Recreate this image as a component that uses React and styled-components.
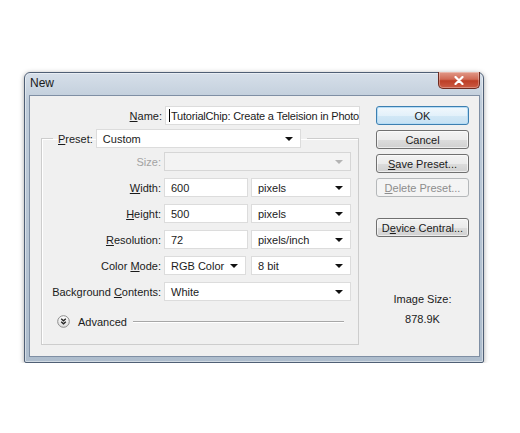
import React from "react";
import styled, { createGlobalStyle, css } from "styled-components";

const GlobalStyle = createGlobalStyle`
  body {
    margin: 0;
    background: #ffffff;
    font-family: "Liberation Sans", Arial, sans-serif;
    font-size: 11px;
    color: #1b1b1b;
  }
`;

const Page = styled.div`
  padding: 72px 0 0 24px;
`;

const Window = styled.div`
  width: 460px;
  height: 291px;
  box-sizing: border-box;
  display: flex;
  flex-direction: column;
  border: 1px solid #4f5f75;
  border-radius: 6px 6px 2px 2px;
  background: linear-gradient(to bottom, #d6dfe9 0%, #bfccda 10%, #aebdcd 100%);
  box-shadow: 0 1px 5px rgba(0, 0, 0, 0.35), inset 0 0 0 1px rgba(255, 255, 255, 0.45);
`;

const TitleBar = styled.div`
  height: 22px;
  display: flex;
  justify-content: space-between;
  align-items: flex-start;
  padding-left: 5px;
`;

const Title = styled.div`
  font-size: 12px;
  line-height: 14px;
  padding-top: 3px;
  color: #1a1a1a;
`;

const CloseButton = styled.div`
  width: 42px;
  height: 17px;
  margin: -1px 3px 0 0;
  box-sizing: border-box;
  display: flex;
  align-items: center;
  justify-content: center;
  border: 1px solid #6e2a1f;
  border-top: none;
  border-radius: 0 0 5px 5px;
  background: linear-gradient(to bottom, #e29a89 0%, #d06a55 45%, #bd3e26 55%, #cb5b44 100%);
  box-shadow: inset 0 0 0 1px rgba(255, 255, 255, 0.3);
`;

const Client = styled.div`
  flex: 1;
  margin: 0 3px 5px 4px;
  border: 1px solid #7f8fa4;
  background: #f0f0f0;
  display: flex;
  padding: 10px 10px 0 0;
`;

const FormArea = styled.div`
  width: 331px;
  display: flex;
  flex-direction: column;
`;

const NameRow = styled.div`
  display: grid;
  grid-template-columns: 132px 195px;
  column-gap: 3px;
  align-items: center;
`;

const Label = styled.span`
  text-align: right;
  white-space: nowrap;
  color: ${(p) => (p.$disabled ? "#a3a3a3" : "#1b1b1b")};
`;

const Field = styled.div`
  height: 19px;
  box-sizing: border-box;
  display: flex;
  align-items: center;
  padding-left: ${(p) => (p.$caret ? "3px" : "6px")};
  letter-spacing: ${(p) => (p.$caret ? "-0.2px" : "0")};
  background: #ffffff;
  border: 1px solid #dcdcdc;
  white-space: nowrap;
  overflow: hidden;
`;

const Caret = styled.span`
  width: 1px;
  height: 13px;
  background: #000;
  margin-right: 1px;
`;

const Select = styled.div`
  height: 19px;
  box-sizing: border-box;
  display: flex;
  align-items: center;
  justify-content: space-between;
  padding: 0 7px 0 6px;
  border: 1px solid ${(p) => (p.$disabled ? "#d6d6d6" : "#dcdcdc")};
  background: ${(p) => (p.$disabled ? "#f3f3f3" : "#ffffff")};
  white-space: nowrap;
  ${(p) =>
    p.$span &&
    css`
      grid-column: span 2;
    `}
  ${(p) =>
    p.$width &&
    css`
      width: ${p.$width}px;
    `}
`;

const Arrow = styled.span`
  width: 0;
  height: 0;
  border-left: 4px solid transparent;
  border-right: 4px solid transparent;
  border-top: 4px solid ${(p) => (p.$disabled ? "#b4b4b4" : "#111")};
`;

const Group = styled.fieldset`
  margin: 4px 0 0 11px;
  width: 318px;
  box-sizing: border-box;
  padding: 0 0 16px 0;
  border: 1px solid #cdcdcd;
  box-shadow: inset 1px 1px 0 #ffffff;
`;

const Legend = styled.legend`
  margin-left: 11px;
  padding: 0 6px 0 5px;
  display: flex;
  align-items: center;
  gap: 3px;
`;

const Rows = styled.div`
  margin-top: 4px;
  display: grid;
  grid-template-columns: 119px 84px 100px;
  grid-auto-rows: 19px;
  column-gap: 3px;
  row-gap: 7px;
  align-items: center;
`;

const AdvancedRow = styled.div`
  margin-top: 14px;
  display: flex;
  align-items: center;
  padding: 0 14px 0 15px;
`;

const AdvancedText = styled.span`
  margin: 0 6px 0 8px;
`;

const Groove = styled.div`
  flex: 1;
  height: 0;
  border-top: 1px solid #a7a7a7;
  border-bottom: 1px solid #ffffff;
`;

const ButtonColumn = styled.div`
  margin-left: auto;
  width: 93px;
  display: flex;
  flex-direction: column;
  align-items: center;
`;

const Button = styled.div`
  width: 93px;
  height: 19px;
  box-sizing: border-box;
  display: flex;
  align-items: center;
  justify-content: center;
  border: 1px solid #707070;
  border-radius: 3px;
  background: linear-gradient(to bottom, #f3f3f3 0%, #ebebeb 50%, #dddddd 51%, #d0d0d0 100%);
  box-shadow: inset 0 0 0 1px rgba(255, 255, 255, 0.6);
  margin-bottom: ${(p) => p.$gap ?? 5}px;
  ${(p) =>
    p.$default &&
    css`
      border-color: #3c7fb1;
      background: linear-gradient(to bottom, #f1f8fd 0%, #e3f1fa 50%, #d2e8f6 51%, #c6e1f3 100%);
      box-shadow: inset 0 0 0 1px #b6dcf5;
    `}
  ${(p) =>
    p.$disabled &&
    css`
      border-color: #b5b8ba;
      background: #f4f4f4;
      color: #8d8d8d;
      box-shadow: none;
    `}
`;

const SizeInfo = styled.div`
  margin-top: 50px;
  display: flex;
  flex-direction: column;
  align-items: center;
  gap: 6px;
  line-height: 14px;
`;

const AdvancedIcon = () => (
  <svg width="13" height="13" viewBox="0 0 13 13">
    <defs>
      <linearGradient id="adv" x1="0" y1="0" x2="0" y2="1">
        <stop offset="0" stopColor="#ffffff" />
        <stop offset="1" stopColor="#dcdcdc" />
      </linearGradient>
    </defs>
    <circle cx="6.5" cy="6.5" r="5.8" fill="url(#adv)" stroke="#8a8a8a" strokeWidth="1" />
    <path d="M4.2 3.8 L6.5 5.8 L8.8 3.8 M4.2 6.8 L6.5 8.8 L8.8 6.8" fill="none" stroke="#222" strokeWidth="1.3" />
  </svg>
);

const CloseIcon = () => (
  <svg width="10" height="9" viewBox="0 0 10 9">
    <path d="M1.5 1 L8.5 8 M8.5 1 L1.5 8" stroke="#ffffff" strokeWidth="2.2" strokeLinecap="round" />
  </svg>
);

const App = () => {
  return (
    <Page>
      <GlobalStyle />
      <Window>
        <TitleBar>
          <Title>New</Title>
          <CloseButton>
            <CloseIcon />
          </CloseButton>
        </TitleBar>
        <Client>
          <FormArea>
            <NameRow>
              <Label>
                <u>N</u>ame:
              </Label>
              <Field $caret>
                <Caret />
                TutorialChip: Create a Teleision in Photo
              </Field>
            </NameRow>
            <Group>
              <Legend>
                <Label>
                  <u>P</u>reset:
                </Label>
                <Select $width={205}>
                  Custom
                  <Arrow />
                </Select>
              </Legend>
              <Rows>
                <Label $disabled>Size:</Label>
                <Select $span $disabled>
                  <span />
                  <Arrow $disabled />
                </Select>

                <Label>
                  <u>W</u>idth:
                </Label>
                <Field>600</Field>
                <Select>
                  pixels
                  <Arrow />
                </Select>

                <Label>
                  <u>H</u>eight:
                </Label>
                <Field>500</Field>
                <Select>
                  pixels
                  <Arrow />
                </Select>

                <Label>
                  <u>R</u>esolution:
                </Label>
                <Field>72</Field>
                <Select>
                  pixels/inch
                  <Arrow />
                </Select>

                <Label>
                  Color <u>M</u>ode:
                </Label>
                <Select $width={82}>
                  RGB Color
                  <Arrow />
                </Select>
                <Select>
                  8 bit
                  <Arrow />
                </Select>

                <Label>
                  Background <u>C</u>ontents:
                </Label>
                <Select $span>
                  White
                  <Arrow />
                </Select>
              </Rows>
              <AdvancedRow>
                <AdvancedIcon />
                <AdvancedText>Advanced</AdvancedText>
                <Groove />
              </AdvancedRow>
            </Group>
          </FormArea>
          <ButtonColumn>
            <Button $default>OK</Button>
            <Button>Cancel</Button>
            <Button>
              <u>S</u>ave Preset...
            </Button>
            <Button $disabled $gap={21}>
              <u>D</u>elete Preset...
            </Button>
            <Button>
              D<u>e</u>vice Central...
            </Button>
            <SizeInfo>
              <span>Image Size:</span>
              <span>878.9K</span>
            </SizeInfo>
          </ButtonColumn>
        </Client>
      </Window>
    </Page>
  );
};

export default App;
